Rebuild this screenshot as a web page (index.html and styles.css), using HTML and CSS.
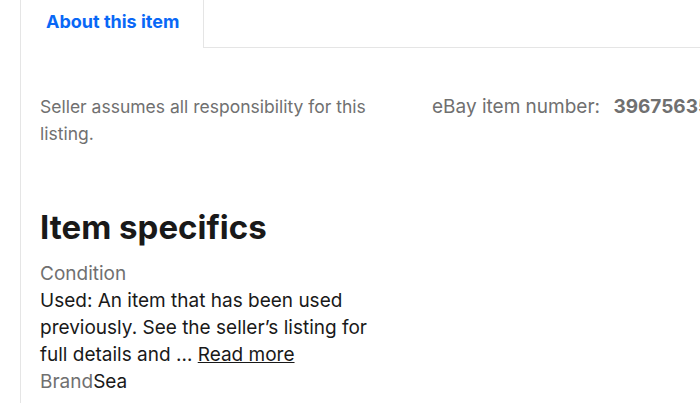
FILE: index.html
```html
<!DOCTYPE html>
<html lang="en">
<head>
  <meta charset="UTF-8">
  <title>About this item</title>
  <link rel="stylesheet" href="styles.css">
</head>
<body>
  <div class="tabs">
    <div class="tab tab-active">About this item</div>
    <div class="tab-rest"></div>
  </div>

  <div class="panel">
    <div class="info-row">
      <p class="seller-note">Seller assumes all responsibility for this listing.</p>
      <div class="item-number">
        <span class="item-number-label">eBay item number:</span>
        <span class="item-number-value">396756353521</span>
      </div>
    </div>

    <h2 class="section-title">Item specifics</h2>
    <dl class="specs">
      <dt class="spec-label">Condition</dt>
      <dd class="spec-value">Used: An item that has been used previously. See the seller’s listing for full details and … <a href="#" class="read-more">Read more</a></dd>
      <div class="spec-inline">
        <dt class="spec-label">Brand</dt><dd class="spec-value">Sea</dd>
      </div>
    </dl>
  </div>
</body>
</html>
```

FILE: styles.css
```css
body {
  margin: 0;
  font-family: "Inter", "Open Sans", sans-serif;
  color: #191919;
  background: #fff;
  overflow: hidden;
}

/* tab bar */
.tabs {
  display: flex;
  height: 48px;
}

.tab {
  margin-left: 20px;
  width: 184px;
  box-sizing: border-box;
  border-left: 1px solid #e5e5e5;
  border-right: 1px solid #e5e5e5;
  padding: 11px 0 0 25px;
  font-size: 18px;
  font-weight: 700;
  color: #0968f6;
}

.tab-rest {
  flex: 1;
  border-bottom: 1px solid #e5e5e5;
}

/* panel */
.panel {
  margin-left: 20px;
  border-left: 1px solid #e5e5e5;
  padding: 45px 0 0 19px;
  height: calc(100vh - 48px);
  box-sizing: border-box;
}

.info-row {
  display: flex;
  line-height: 27px;
  color: #707070;
}

.seller-note {
  flex: none;
  margin: 0 32px 0 0;
  width: 360px;
  font-size: 17.5px;
}

.item-number {
  flex: none;
  white-space: nowrap;
  font-size: 19px;
}

.item-number-value {
  margin-left: 8px;
  font-weight: 700;
}

.section-title {
  margin: 60px 0 0;
  font-size: 33px;
  line-height: 40px;
  font-weight: 700;
  color: #191919;
}

.specs {
  margin: 13px 0 0;
  width: 340px;
  font-size: 19px;
  line-height: 27px;
}

.spec-label {
  color: #707070;
}

.spec-value {
  margin: 0;
  color: #191919;
}

.spec-inline {
  display: flex;
}

.read-more {
  color: #191919;
}
```
